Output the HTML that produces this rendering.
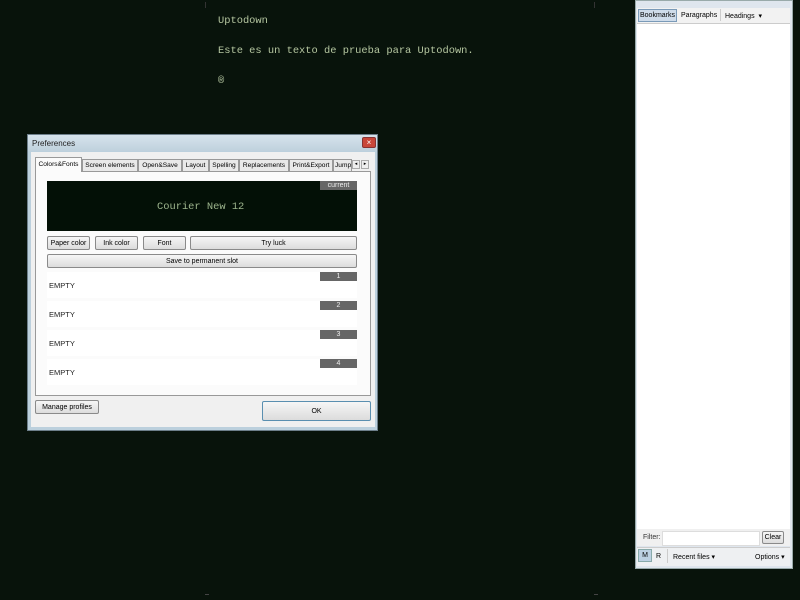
<!DOCTYPE html>
<html><head><style>
body{margin:0;width:800px;height:600px;background:#08130b;position:relative;overflow:hidden;font-family:"Liberation Sans",sans-serif;font-size:7px;color:#000}
.mono{position:absolute;font-family:"Liberation Mono",monospace;font-size:10.4px;color:#b5c6a0}
.a{position:absolute;white-space:nowrap}
.btn{position:absolute;background:linear-gradient(#f6f6f6,#dcdcdc);border:1px solid #8a8a8a;border-radius:2px;text-align:center;line-height:13px;font-size:7px;box-sizing:border-box;white-space:nowrap}
.tab{position:absolute;top:159px;height:12px;line-height:12px;border:1px solid #999;border-bottom:none;background:#e9e9e9;padding:0 1px;font-size:6.6px;box-sizing:border-box;white-space:nowrap;overflow:hidden;text-align:center}
.slot{position:absolute;left:47px;width:310px;height:26px;background:#fff}
.slot span{position:absolute;left:2px;top:9px;font-size:7.5px;color:#222}
.slot b{position:absolute;right:0;top:0;width:37px;height:9px;background:#666;color:#eee;font-weight:normal;text-align:center;line-height:9px;font-size:7px}
</style></head><body>
<div class="a" style="left:205px;top:2px;width:1px;height:6px;background:#333"></div>
<div class="a" style="left:594px;top:2px;width:1px;height:6px;background:#333"></div>
<div class="mono" style="left:218px;top:15px">Uptodown</div>
<div class="mono" style="left:218px;top:45px">Este es un texto de prueba para Uptodown.</div>
<div class="mono" style="left:218px;top:75px">®</div>

<!-- right panel -->
<div class="a" style="left:635px;top:0;width:156px;height:567px;background:#dfe6ee;border:1px solid #9aa"></div>
<div class="a" style="left:637px;top:8px;width:153px;height:15px;background:#f2f2f2"></div>
<div class="a" style="left:638px;top:9px;width:39px;height:13px;border:1px solid #7a9ab8;background:#cfdcea;box-sizing:border-box;line-height:11px;text-align:center">Bookmarks</div>
<div class="a" style="left:681px;top:12px">Paragraphs</div>
<div class="a" style="left:720px;top:9px;width:1px;height:12px;background:#ccc"></div>
<div class="a" style="left:725px;top:12px">Headings &nbsp;▾</div>
<div class="a" style="left:637px;top:23px;width:153px;height:505px;background:#fff;border-top:1px solid #ccc"></div>
<div class="a" style="left:637px;top:529px;width:153px;height:17px;background:#f0f0f0"></div>
<div class="a" style="left:643px;top:534px;color:#333">Filter:</div>
<div class="a" style="left:662px;top:531px;width:96px;height:13px;background:#fff;border:1px solid #ddd"></div>
<div class="btn" style="left:762px;top:531px;width:22px;height:13px;line-height:12px">Clear</div>
<div class="a" style="left:637px;top:547px;width:153px;height:18px;background:#eef0f2;border-top:1px solid #ccc"></div>
<div class="a" style="left:638px;top:549px;width:14px;height:13px;background:#bcd0e2;border:1px solid #8aa;box-sizing:border-box;text-align:center;line-height:11px">M</div>
<div class="a" style="left:656px;top:553px">R</div>
<div class="a" style="left:667px;top:549px;width:1px;height:14px;background:#ccc"></div>
<div class="a" style="left:673px;top:553px">Recent files ▾</div>
<div class="a" style="left:755px;top:553px">Options ▾</div>

<!-- dialog -->
<div class="a" style="left:27px;top:134px;width:351px;height:297px;background:#bcd0dd;border:1px solid #6d7f8b;box-sizing:border-box"></div>
<div class="a" style="left:28px;top:135px;width:349px;height:16px;background:linear-gradient(#d6e3ec,#bfd1dd)"></div>
<div class="a" style="left:32px;top:139px;font-size:8px;color:#222">Preferences</div>
<div class="a" style="left:362px;top:137px;width:14px;height:11px;background:#c9473a;border:1px solid #833;border-radius:2px;color:#fff;text-align:center;line-height:10px;font-size:8px;box-sizing:border-box">×</div>
<div class="a" style="left:31px;top:152px;width:344px;height:275px;background:#f0f0f0"></div>
<div class="a" style="left:35px;top:171px;width:336px;height:225px;background:#fbfbfb;border:1px solid #999;box-sizing:border-box"></div>
<div class="tab" style="left:35px;top:157px;height:15px;line-height:14px;background:#fbfbfb;width:47px">Colors&amp;Fonts</div>
<div class="tab" style="left:82px;width:56px">Screen elements</div>
<div class="tab" style="left:138px;width:44px">Open&amp;Save</div>
<div class="tab" style="left:182px;width:27px">Layout</div>
<div class="tab" style="left:209px;width:30px">Spelling</div>
<div class="tab" style="left:239px;width:50px">Replacements</div>
<div class="tab" style="left:289px;width:44px">Print&amp;Export</div>
<div class="tab" style="left:333px;width:19px;text-align:left">Jump</div>
<div class="a" style="left:352px;top:160px;width:8px;height:9px;border:1px solid #aaa;background:#eee;font-size:5px;text-align:center;box-sizing:border-box">◂</div>
<div class="a" style="left:361px;top:160px;width:8px;height:9px;border:1px solid #aaa;background:#eee;font-size:5px;text-align:center;box-sizing:border-box">▸</div>
<div class="a" style="left:47px;top:181px;width:310px;height:50px;background:#031006"></div>
<div class="a" style="left:320px;top:181px;width:37px;height:9px;background:#666;color:#eee;text-align:center;line-height:9px">current</div>
<div class="mono" style="left:157px;top:201px;color:#9cb48c">Courier New 12</div>
<div class="btn" style="left:47px;top:236px;width:43px;height:14px">Paper color</div>
<div class="btn" style="left:95px;top:236px;width:43px;height:14px">Ink color</div>
<div class="btn" style="left:143px;top:236px;width:43px;height:14px">Font</div>
<div class="btn" style="left:190px;top:236px;width:167px;height:14px">Try luck</div>
<div class="btn" style="left:47px;top:254px;width:310px;height:14px">Save to permanent slot</div>
<div class="slot" style="top:272px"><span>EMPTY</span><b>1</b></div>
<div class="slot" style="top:301px"><span>EMPTY</span><b>2</b></div>
<div class="slot" style="top:330px"><span>EMPTY</span><b>3</b></div>
<div class="slot" style="top:359px"><span>EMPTY</span><b>4</b></div>
<div class="btn" style="left:35px;top:400px;width:64px;height:14px">Manage profiles</div>
<div class="btn" style="left:262px;top:401px;width:109px;height:20px;line-height:19px;border-color:#5a8fb0">OK</div>
<div class="a" style="left:205px;top:594px;width:4px;height:1px;background:#444"></div>
<div class="a" style="left:594px;top:594px;width:4px;height:1px;background:#444"></div>
</body></html>
